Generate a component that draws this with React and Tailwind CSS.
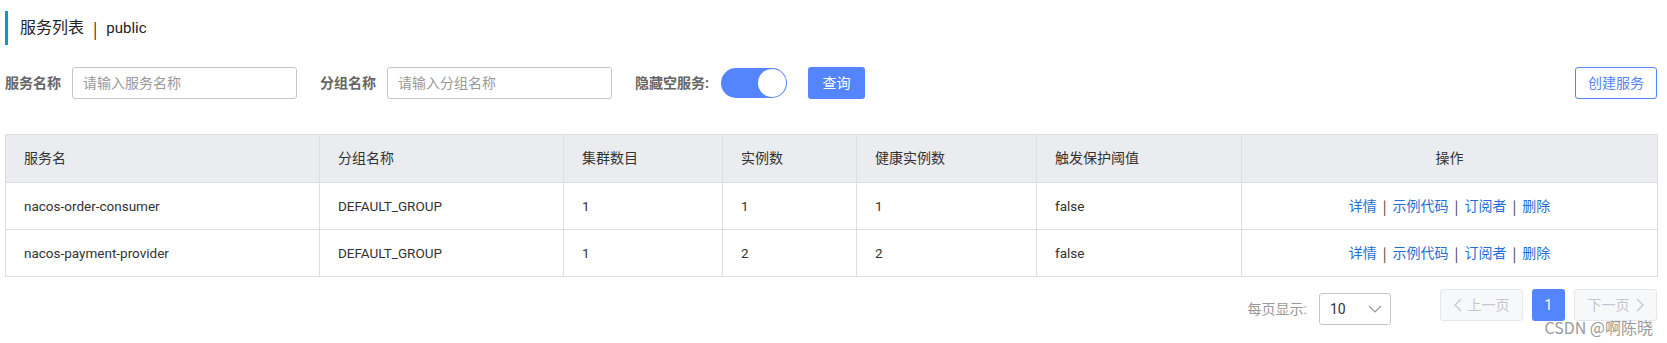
import React from 'react'

const FONT = "font-['Roboto','Noto_Sans_CJK_SC',sans-serif]"

const columns = [
  { title: '服务名', width: 'w-[314px]' },
  { title: '分组名称', width: 'w-[244px]' },
  { title: '集群数目', width: 'w-[159px]' },
  { title: '实例数', width: 'w-[134px]' },
  { title: '健康实例数', width: 'w-[180px]' },
  { title: '触发保护阈值', width: 'w-[205px]' },
  { title: '操作', width: 'w-[416px]', center: true },
]

const services = [
  { name: 'nacos-order-consumer', group: 'DEFAULT_GROUP', clusters: 1, instances: 1, healthy: 1, threshold: 'false' },
  { name: 'nacos-payment-provider', group: 'DEFAULT_GROUP', clusters: 1, instances: 2, healthy: 2, threshold: 'false' },
]

function Actions() {
  const links = ['详情', '示例代码', '订阅者', '删除']
  return (
    <div className="flex items-center justify-center text-[14px]">
      {links.map((l, i) => (
        <React.Fragment key={l}>
          {i > 0 && <span className="mx-[6px] font-['Noto_Sans_CJK_SC',sans-serif] text-[#333]">|</span>}
          <a className="cursor-pointer text-[#1f6fd6]">{l}</a>
        </React.Fragment>
      ))}
    </div>
  )
}

function Chevron({ dir = 'down', className = '' }) {
  const points = {
    down: '1,1 7,7 13,1',
    left: '7,1 1,7 7,13',
    right: '1,1 7,7 1,13',
  }[dir]
  const box = dir === 'down' ? '0 0 14 8' : '0 0 8 14'
  return (
    <svg viewBox={box} className={className} fill="none" stroke="currentColor" strokeWidth="1.2">
      <polyline points={points} />
    </svg>
  )
}

export default function App() {
  return (
    <div className={`relative min-h-[343px] bg-white pl-[5px] pr-[10px] pt-[11px] text-[14px] text-[#333] ${FONT}`}>
      {/* title */}
      <div className="flex h-[34px] items-center border-l-[3px] border-[#0a96d2] pl-[12px] text-[16px] leading-[20px] text-[#222]">
        <span>服务列表</span>
        <span className="mx-[9px] font-['Noto_Sans_CJK_SC',sans-serif]">|</span>
        <span className="text-[15px]">public</span>
      </div>

      {/* filters */}
      <div className="mt-[22px] flex h-[32px] items-center">
        <span className="mr-[11px] font-bold text-[#666]">服务名称</span>
        <input
          className="h-[32px] w-[225px] rounded-[3px] border border-[#c4c6cf] px-[10px] text-[14px] outline-none placeholder:text-[#999]"
          placeholder="请输入服务名称"
        />
        <span className="ml-[23px] mr-[11px] font-bold text-[#666]">分组名称</span>
        <input
          className="h-[32px] w-[225px] rounded-[3px] border border-[#c4c6cf] px-[10px] text-[14px] outline-none placeholder:text-[#999]"
          placeholder="请输入分组名称"
        />
        <span className="ml-[23px] mr-[12px] font-bold text-[#666]">隐藏空服务:</span>
        <div className="flex h-[30px] w-[66px] items-center rounded-full bg-[#5584ff] p-px">
          <div className="ml-auto h-[28px] w-[28px] rounded-full bg-white"></div>
        </div>
        <button className="ml-[21px] h-[32px] w-[57px] rounded-[3px] bg-[#5584ff] text-white">查询</button>
        <button className="ml-auto h-[32px] w-[82px] rounded-[3px] border border-[#5584ff] bg-white text-[#5584ff]">创建服务</button>
      </div>

      {/* table */}
      <table className="mt-[35px] w-full table-fixed border-collapse">
        <colgroup>
          {columns.map(c => <col key={c.title} className={c.width} />)}
        </colgroup>
        <thead>
          <tr>
            {columns.map(c => (
              <th
                key={c.title}
                className={`h-[48px] border border-[#dcdee3] bg-[#ebecf0] px-[18px] font-normal ${c.center ? 'text-center' : 'text-left'}`}
              >
                {c.title}
              </th>
            ))}
          </tr>
        </thead>
        <tbody className="text-[13.5px]">
          {services.map(s => (
            <tr key={s.name}>
              <td className="h-[47px] border border-[#dcdee3] px-[18px]">{s.name}</td>
              <td className="border border-[#dcdee3] px-[18px]">{s.group}</td>
              <td className="border border-[#dcdee3] px-[18px]">{s.clusters}</td>
              <td className="border border-[#dcdee3] px-[18px]">{s.instances}</td>
              <td className="border border-[#dcdee3] px-[18px]">{s.healthy}</td>
              <td className="border border-[#dcdee3] px-[18px]">{s.threshold}</td>
              <td className="border border-[#dcdee3] px-[18px]"><Actions /></td>
            </tr>
          ))}
        </tbody>
      </table>

      {/* pagination */}
      <div className="mt-[12px] flex items-start justify-end">
        <span className="mr-[12px] mt-[4px] leading-[32px] text-[#999]">每页显示:</span>
        <div className="mt-[4px] flex h-[32px] w-[72px] items-center justify-between rounded-[3px] border border-[#c4c6cf] pl-[10px] pr-[8px]">
          <span>10</span>
          <Chevron dir="down" className="h-[8px] w-[14px] text-[#999]" />
        </div>
        <button className="ml-[49px] flex h-[32px] w-[83px] items-center justify-center gap-[6px] rounded-[3px] border border-[#e6e7eb] bg-[#f7f8fa] text-[#c4c6cf]">
          <Chevron dir="left" className="h-[14px] w-[8px]" />
          <span>上一页</span>
        </button>
        <button className="ml-[9px] h-[32px] w-[33px] rounded-[3px] bg-[#5584ff] text-white">1</button>
        <button className="ml-[9px] flex h-[32px] w-[83px] items-center justify-center gap-[6px] rounded-[3px] border border-[#e6e7eb] bg-[#f7f8fa] text-[#c4c6cf]">
          <span>下一页</span>
          <Chevron dir="right" className="h-[14px] w-[8px]" />
        </button>
      </div>

      {/* watermark */}
      <div className="pointer-events-none absolute right-[14px] top-[316px] font-['Noto_Sans_CJK_SC',sans-serif] text-[16px] leading-[22px] text-[#999]">
        CSDN @啊陈晓
      </div>
    </div>
  )
}
